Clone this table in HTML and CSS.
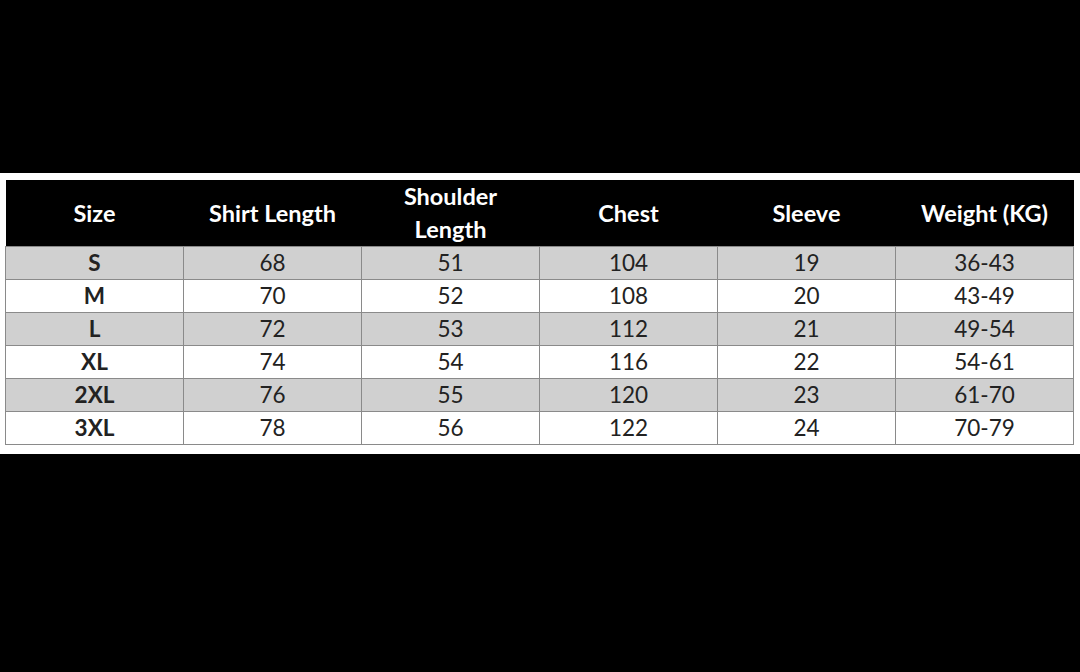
FILE: index.html
```html
<!DOCTYPE html>
<html>
<head>
<meta charset="utf-8">
<link rel="stylesheet" href="styles.css">
</head>
<body>
<div class="band">
<table class="chart">
<thead>
<tr><th>Size</th><th>Shirt Length</th><th>Shoulder<br>Length</th><th>Chest</th><th>Sleeve</th><th>Weight (KG)</th></tr>
</thead>
<tbody>
<tr class="alt"><td class="sz">S</td><td>68</td><td>51</td><td>104</td><td>19</td><td>36-43</td></tr>
<tr><td class="sz">M</td><td>70</td><td>52</td><td>108</td><td>20</td><td>43-49</td></tr>
<tr class="alt"><td class="sz">L</td><td>72</td><td>53</td><td>112</td><td>21</td><td>49-54</td></tr>
<tr><td class="sz">XL</td><td>74</td><td>54</td><td>116</td><td>22</td><td>54-61</td></tr>
<tr class="alt"><td class="sz">2XL</td><td>76</td><td>55</td><td>120</td><td>23</td><td>61-70</td></tr>
<tr><td class="sz">3XL</td><td>78</td><td>56</td><td>122</td><td>24</td><td>70-79</td></tr>
</tbody>
</table>
</div>
</body>
</html>
```
FILE: styles.css
```css
html, body {
  margin: 0;
  padding: 0;
  background: #000;
  height: 672px;
  overflow: hidden;
}
.band {
  margin-top: 173px;
  background: #fff;
  padding: 7px 6px 9px 5px;
}
.chart {
  width: 1069px;
  border-collapse: collapse;
  table-layout: fixed;
  font-family: Lato, "Open Sans", sans-serif;
  color: #222;
}
.chart th {
  background: #000;
  color: #fff;
  font-weight: 700;
  font-size: 23.5px;
  line-height: 33px;
  height: 66px;
  padding: 0;
  text-align: center;
}
.chart td {
  height: 32px;
  padding: 0;
  font-size: 22.5px;
  line-height: 32px;
  text-align: center;
  border: 1px solid #8a8a8a;
}
.chart td.sz {
  font-weight: 700;
}
.chart tr.alt td {
  background: #d0d0d0;
}
```
